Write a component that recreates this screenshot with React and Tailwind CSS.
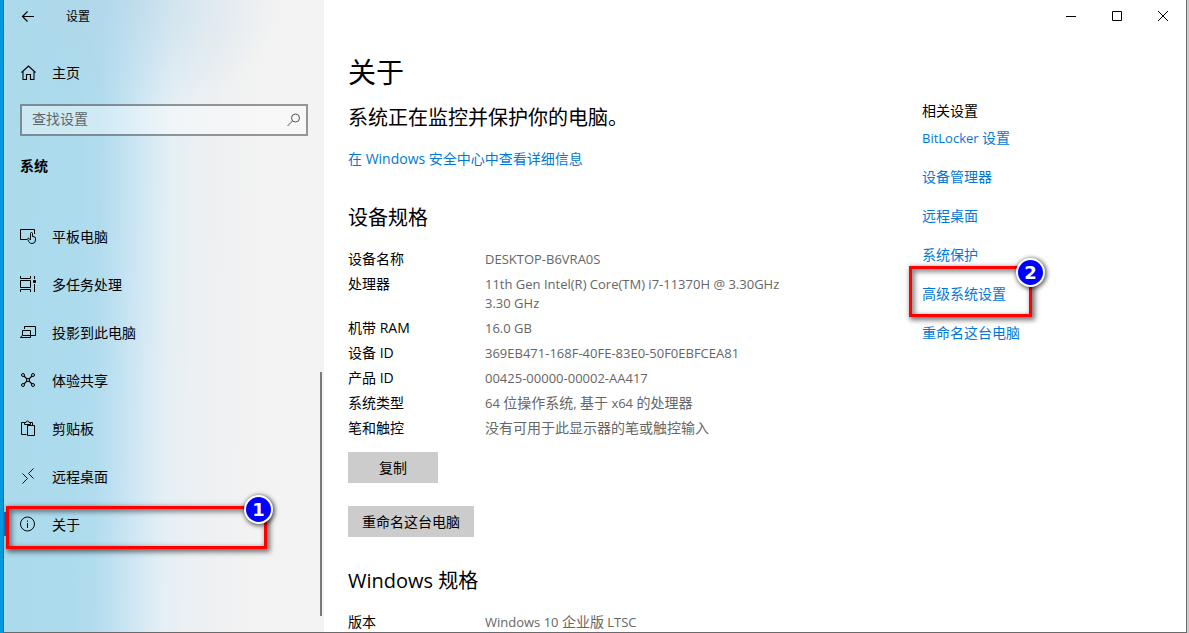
import React from "react";

function Svg({ children, size = 16, className = "" }) {
  return (
    <svg
      width={size}
      height={size}
      viewBox={`0 0 ${size} ${size}`}
      fill="none"
      stroke="currentColor"
      strokeWidth="1"
      className={`shrink-0 ${className}`}
      aria-hidden="true"
    >
      {children}
    </svg>
  );
}

const BackIcon = () => (
  <Svg>
    <path d="M14 7.5H2.5M7.5 2.5l-5 5 5 5" strokeWidth="1.2" />
  </Svg>
);
const HomeIcon = () => (
  <Svg>
    <path d="M1.5 7.5L8.5 1l7 6.5M3 6.5v8h3.5v-5h4v5H14v-8" strokeWidth="1.1" />
  </Svg>
);
const SearchIcon = () => (
  <Svg>
    <circle cx="9.5" cy="6" r="4" />
    <path d="M6.5 9L1.5 14" />
  </Svg>
);
const TabletIcon = () => (
  <Svg>
    <path d="M7 11.5H.5v-10h14v4.500" />
    <path d="M10.500 10.500V5.500a1 1 0 0 1 2 0V8.500l1.500.3a1.500 1.500 0 0 1 1.500 1.500V12a3.500 3.500 0 0 1-3.500 3.500c-2.200 0-2.700-.8-4.300-4.200-.3-1 .8-1.500 1.500-.8l1.300 1.500z" />
  </Svg>
);
const MultitaskIcon = () => (
  <Svg>
    <path d="M.5 0v2.500h10V0M.5 4.500h10v7H.5zM.5 16v-2.500h10V16M14.500 0v3M14.500 8v8" />
    <rect x="13" y="4" width="3" height="3" rx="1" fill="currentColor" stroke="none" />
  </Svg>
);
const ProjectIcon = () => (
  <Svg>
    <path d="M4.500 5V2.500h11v9H11M2.500 6.500h8v5h-8zM2 11.500l-1.500 2h10v-2" />
  </Svg>
);
const ShareIcon = () => (
  <Svg>
    <circle cx="3" cy="3" r="1.500" />
    <circle cx="13" cy="3" r="1.500" />
    <circle cx="3" cy="13" r="1.500" />
    <circle cx="13" cy="13" r="1.500" />
    <circle cx="8" cy="8" r="1.500" />
    <path d="M4 4l3 3M12 4L9 7M4 12l3-3M12 12L9 9" strokeWidth="1.200" />
  </Svg>
);
const ClipboardIcon = () => (
  <Svg>
    <path d="M6.500 14.500h-5v-12h3M10 2.500h2.500v3M4.500 4.500v-2h1.500a1.500 1.500 0 0 1 3 0h1.500v2zM7.500 5.500h7v10h-7z" />
  </Svg>
);
const RemoteIcon = () => (
  <Svg>
    <path d="M2.500 5.500l5 5-5 5M13.500.5l-5 5 5 5" />
  </Svg>
);
const InfoIcon = () => (
  <Svg>
    <circle cx="7.500" cy="8" r="7" />
    <path d="M7.500 7v5M7.500 4.500v1.200" />
  </Svg>
);

const NAV = [
  { label: "平板电脑", Icon: TabletIcon },
  { label: "多任务处理", Icon: MultitaskIcon },
  { label: "投影到此电脑", Icon: ProjectIcon },
  { label: "体验共享", Icon: ShareIcon },
  { label: "剪贴板", Icon: ClipboardIcon },
  { label: "远程桌面", Icon: RemoteIcon },
  { label: "关于", Icon: InfoIcon, current: true },
];

const DEVICE = [
  ["设备名称", "DESKTOP-B6VRA0S"],
  ["处理器", "11th Gen Intel(R) Core(TM) i7-11370H @ 3.30GHz 3.30 GHz"],
  ["机带 RAM", "16.0 GB"],
  ["设备 ID", "369EB471-168F-40FE-83E0-50F0EBFCEA81"],
  ["产品 ID", "00425-00000-00002-AA417"],
  ["系统类型", "64 位操作系统, 基于 x64 的处理器"],
  ["笔和触控", "没有可用于此显示器的笔或触控输入"],
];

const LINKS = ["BitLocker 设置", "设备管理器", "远程桌面", "系统保护", "高级系统设置", "重命名这台电脑"];

// Latin runs are set one pixel smaller than the Chinese text around them.
function Mixed({ text }) {
  return text
    .split(/([\x20-\x7e]+)/)
    .filter(Boolean)
    .map((part, i) =>
      /^[\x20-\x7e]/.test(part) ? (
        <span key={i} className="text-[13px] leading-none">{part}</span>
      ) : (
        part
      )
    );
}

function Badge({ children, className }) {
  return (
    <span
      className={`absolute flex size-[29px] items-center justify-center rounded-full border-2 border-white bg-[#0000ff] font-['DejaVu_Sans'] text-lg leading-none font-bold text-white shadow-[1px_1px_4px_1px_rgba(0,0,0,0.6)] ${className}`}
    >
      {children}
    </span>
  );
}

function Frame({ number, className, badgeClass }) {
  return (
    <span
      className={`pointer-events-none absolute border-3 border-[#ff0000] shadow-[2px_2px_5px_1px_rgba(0,0,0,0.55),inset_2px_2px_5px_1px_rgba(0,0,0,0.45)] ${className}`}
    >
      <Badge className={badgeClass}>{number}</Badge>
    </span>
  );
}

function SpecTable({ rows }) {
  return (
    <table className="border-collapse text-left text-sm leading-[19px]">
      <tbody>
        {rows.map(([k, v]) => (
          <tr key={k} className="align-top">
            <th scope="row" className="w-[137px] p-0 pb-[6px] font-normal">{k}</th>
            <td className="max-w-[310px] p-0 pb-[6px] text-[#666]"><Mixed text={v} /></td>
          </tr>
        ))}
      </tbody>
    </table>
  );
}

function Sidebar() {
  return (
    <aside className="relative w-80 shrink-0 bg-[radial-gradient(ellipse_150px_110px_at_130px_0px,rgba(180,212,230,0.5),transparent),linear-gradient(91deg,#abdaeb_0%,#acdbed_22%,#b1dcee_30%,#bfe1f1_36%,#d4e9f4_44%,#e4eff5_51%,#ebf0f3_59%,#f0f1f2_70%,#f3f3f3_80%)]">
      <header className="flex h-[33px] items-center pl-4">
        <button type="button" aria-label="返回" className="flex w-[46px] items-center">
          <BackIcon />
        </button>
        <span className="text-xs">设置</span>
      </header>
      <a href="#home" className="mt-4 flex h-12 items-center gap-4 pl-4 text-sm">
        <HomeIcon />
        <span>主页</span>
      </a>
      <div className="mx-4 mt-[7px] flex h-8 items-center border-2 border-black/40 bg-white/40 pr-1 pl-[10px] text-[#555]">
        <input
          type="text"
          aria-label="查找设置"
          placeholder="查找设置"
          className="h-full min-w-0 flex-1 bg-transparent pb-[3px] text-sm outline-none placeholder:text-[#5d676b]"
        />
        <SearchIcon />
      </div>
      <h2 className="mt-4 pl-4 text-sm leading-7 font-bold">系统</h2>
      <nav className="mt-8">
        <ul>
          {NAV.map(({ label, Icon, current }) => (
            <li key={label} className="relative">
              <a
                href={`#${label}`}
                aria-current={current ? "page" : undefined}
                className="flex h-12 items-center gap-4 pl-4 text-sm"
              >
                <Icon />
                <span className="pt-px">{label}</span>
              </a>
              {current && (
                <>
                  <span className="absolute top-3 left-0 h-6 w-1 bg-[#0078d7]" />
                  <Frame
                    number="1"
                    className="top-[6px] right-[57px] -bottom-px left-[2px]"
                    badgeClass="-top-[14px] -right-[9px]"
                  />
                </>
              )}
            </li>
          ))}
        </ul>
      </nav>
      <div className="absolute top-[372px] right-[2px] bottom-4 w-[2px] bg-[#7a7a7a]" />
    </aside>
  );
}

export default function App() {
  return (
    <div className="flex h-screen overflow-hidden bg-white font-['Open_Sans','Noto_Sans_CJK_SC',sans-serif] text-black">
      <div className="w-[3px] shrink-0 bg-[#0099dd]" />
      <div className="flex min-w-0 flex-1 overflow-hidden border-x border-b border-[#6a6a6a] border-l-[#24708f]">
        <Sidebar />
        <div className="flex min-w-0 flex-1 flex-col">
          <header className="flex h-8 shrink-0 justify-end">
            <button type="button" aria-label="最小化" className="flex w-[46px] items-center justify-center">
              <Svg size={10}><path d="M0 5.500h10" /></Svg>
            </button>
            <button type="button" aria-label="最大化" className="flex w-[46px] items-center justify-center">
              <Svg size={10}><path d="M.5.5h9v9h-9z" /></Svg>
            </button>
            <button type="button" aria-label="关闭" className="flex w-[46px] items-center justify-center">
              <Svg size={10}><path d="M0 0l10 10M10 0L0 10" /></Svg>
            </button>
          </header>
          <div className="flex">
            <main className="min-w-0 flex-1 pt-5 pl-6">
              <h1 className="text-[28px] leading-10">关于</h1>
              <p className="mt-3 text-xl leading-7">系统正在监控并保护你的电脑。</p>
              <a href="#security" className="mt-[15px] block text-sm leading-6 text-[#0078d7]">
                在 Windows 安全中心中查看详细信息
              </a>
              <h2 className="mt-[33px] text-xl leading-7">设备规格</h2>
              <div className="mt-[17px]">
                <SpecTable rows={DEVICE} />
              </div>
              <button type="button" className="mt-[9px] block h-[31px] w-[90px] bg-[#ccc] text-sm">复制</button>
              <button type="button" className="mt-[23px] block h-[31px] bg-[#ccc] px-[14px] text-sm">重命名这台电脑</button>
              <h2 className="mt-[30px] text-xl leading-7">Windows 规格</h2>
              <div className="mt-[17px]">
                <SpecTable rows={[["版本", "Windows 10 企业版 LTSC"]]} />
              </div>
            </main>
            <aside className="w-[264px] shrink-0 pt-[65px] text-sm">
              <h2 className="leading-7">相关设置</h2>
              <ul className="-mt-px flex flex-col gap-[11px]">
                {LINKS.map((l) => (
                  <li key={l} className="relative leading-7">
                    <a href={`#${l}`} className="text-[#0078d7]"><Mixed text={l} /></a>
                    {l === "高级系统设置" && (
                      <Frame
                        number="2"
                        className="-top-[14px] -left-[13px] h-[51px] w-[123px]"
                        badgeClass="-top-[11px] -right-4"
                      />
                    )}
                  </li>
                ))}
              </ul>
            </aside>
          </div>
        </div>
      </div>
      <div className="w-[2px] shrink-0 bg-[#ccc]" />
    </div>
  );
}
